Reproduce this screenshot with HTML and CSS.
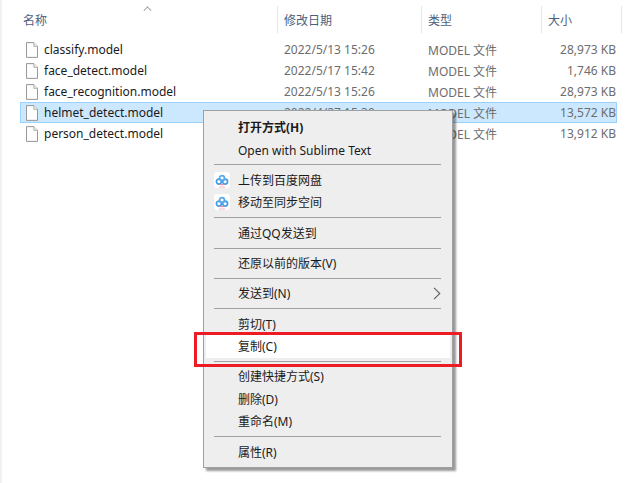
FILE: index.html
```html
<!DOCTYPE html>
<html lang="zh-CN">
<head>
    <meta charset="UTF-8">
    <title>文件列表</title>
    <link rel="stylesheet" href="styles.css">
</head>
<body>
    <div class="explorer">
        <div class="head-row">
            <div class="head-cell">名称<span class="sort-caret"></span></div>
            <div class="head-cell">修改日期</div>
            <div class="head-cell">类型</div>
            <div class="head-cell">大小</div>
        </div>
        <div class="file-list">
            <div class="file-row">
                <div class="name-cell"><svg class="file-icon" viewBox="0 0 13 17"><path d="M.5.5H8.5L12.5 4.5V16.5H.5Z" fill="#fdfdfd" stroke="#8c8c8c"/><path d="M8.5.5V4.5H12.5" fill="#eee" stroke="#a8a8a8"/></svg>classify.model</div>
                <div class="meta-cell">2022/5/13 15:26</div>
                <div class="meta-cell">MODEL 文件</div>
                <div class="size-cell">28,973 KB</div>
            </div>
            <div class="file-row">
                <div class="name-cell"><svg class="file-icon" viewBox="0 0 13 17"><path d="M.5.5H8.5L12.5 4.5V16.5H.5Z" fill="#fdfdfd" stroke="#8c8c8c"/><path d="M8.5.5V4.5H12.5" fill="#eee" stroke="#a8a8a8"/></svg>face_detect.model</div>
                <div class="meta-cell">2022/5/17 15:42</div>
                <div class="meta-cell">MODEL 文件</div>
                <div class="size-cell">1,746 KB</div>
            </div>
            <div class="file-row">
                <div class="name-cell"><svg class="file-icon" viewBox="0 0 13 17"><path d="M.5.5H8.5L12.5 4.5V16.5H.5Z" fill="#fdfdfd" stroke="#8c8c8c"/><path d="M8.5.5V4.5H12.5" fill="#eee" stroke="#a8a8a8"/></svg>face_recognition.model</div>
                <div class="meta-cell">2022/5/13 15:26</div>
                <div class="meta-cell">MODEL 文件</div>
                <div class="size-cell">28,973 KB</div>
            </div>
            <div class="file-row selected">
                <div class="name-cell"><svg class="file-icon" viewBox="0 0 13 17"><path d="M.5.5H8.5L12.5 4.5V16.5H.5Z" fill="#fdfdfd" stroke="#8c8c8c"/><path d="M8.5.5V4.5H12.5" fill="#eee" stroke="#a8a8a8"/></svg>helmet_detect.model</div>
                <div class="meta-cell">2022/4/27 15:30</div>
                <div class="meta-cell">MODEL 文件</div>
                <div class="size-cell">13,572 KB</div>
            </div>
            <div class="file-row">
                <div class="name-cell"><svg class="file-icon" viewBox="0 0 13 17"><path d="M.5.5H8.5L12.5 4.5V16.5H.5Z" fill="#fdfdfd" stroke="#8c8c8c"/><path d="M8.5.5V4.5H12.5" fill="#eee" stroke="#a8a8a8"/></svg>person_detect.model</div>
                <div class="meta-cell"></div>
                <div class="meta-cell">MODEL 文件</div>
                <div class="size-cell">13,912 KB</div>
            </div>
        </div>
    </div>

    <div class="context-menu">
        <div class="menu-item bold">打开方式(H)</div>
        <div class="menu-item">Open with Sublime Text</div>
        <div class="separator"></div>
        <div class="menu-item">
            <svg class="cloud-icon" viewBox="0 0 16 16"><rect width="16" height="16" rx="3" fill="#fff"/><path d="M5 15H11" stroke="#f7b3c4" stroke-width="1"/><circle cx="4.9" cy="9.6" r="2.5" fill="none" stroke="#3f9fe8" stroke-width="1.7"/><circle cx="11.1" cy="9.6" r="2.5" fill="none" stroke="#3f9fe8" stroke-width="1.7"/><circle cx="8" cy="6.2" r="2.5" fill="none" stroke="#5aa8ec" stroke-width="1.7"/><path d="M5.6 12Q8 13.4 10.4 12" fill="none" stroke="#ef7f9c" stroke-width="1.1"/></svg>
            上传到百度网盘
        </div>
        <div class="menu-item">
            <svg class="cloud-icon" viewBox="0 0 16 16"><rect width="16" height="16" rx="3" fill="#fff"/><path d="M5 15H11" stroke="#f7b3c4" stroke-width="1"/><circle cx="4.9" cy="9.6" r="2.5" fill="none" stroke="#3f9fe8" stroke-width="1.7"/><circle cx="11.1" cy="9.6" r="2.5" fill="none" stroke="#3f9fe8" stroke-width="1.7"/><circle cx="8" cy="6.2" r="2.5" fill="none" stroke="#5aa8ec" stroke-width="1.7"/><path d="M5.6 12Q8 13.4 10.4 12" fill="none" stroke="#ef7f9c" stroke-width="1.1"/></svg>
            移动至同步空间
        </div>
        <div class="separator"></div>
        <div class="menu-item">通过QQ发送到</div>
        <div class="separator"></div>
        <div class="menu-item">还原以前的版本(V)</div>
        <div class="separator"></div>
        <div class="menu-item">
            发送到(N)
            <svg class="submenu-arrow" viewBox="0 0 8 13"><path d="M1 .8L6.8 6.5L1 12.2" fill="none" stroke="#5f5f5f" stroke-width="1.1"/></svg>
        </div>
        <div class="separator"></div>
        <div class="menu-item">剪切(T)</div>
        <div class="menu-item highlighted">复制(C)</div>
        <div class="separator"></div>
        <div class="menu-item">创建快捷方式(S)</div>
        <div class="menu-item">删除(D)</div>
        <div class="menu-item">重命名(M)</div>
        <div class="separator"></div>
        <div class="menu-item">属性(R)</div>
    </div>

    <div class="red-mark"></div>
</body>
</html>
```

FILE: styles.css
```css
body {
    margin: 0;
    width: 638px;
    height: 483px;
    position: relative;
    overflow: hidden;
    background-color: #fff;
    font-family: "Noto Sans", "Noto Sans CJK SC", sans-serif;
    font-size: 12px;
}

.explorer {
    height: 100%;
    padding-top: 6px;
    padding-left: 20px;
    box-sizing: border-box;
    border-left: 2px solid #f1f1f1;
}

.head-row {
    display: grid;
    grid-template-columns: 258px 144px 120px 80px;
    height: 27px;
    margin-left: -2px;
}

.head-cell {
    position: relative;
    display: flex;
    align-items: center;
    padding-left: 6px;
    box-sizing: border-box;
    border-right: 1px solid #e5e5e5;
    color: #4c607a;
}

.head-cell:first-child {
    padding-left: 3px;
}

.sort-caret {
    position: absolute;
    left: 124px;
    top: 1px;
    width: 6px;
    height: 6px;
    border-top: 1px solid #8a8a8a;
    border-left: 1px solid #8a8a8a;
    transform: rotate(45deg) scale(.8);
}

.file-list {
    margin-top: 6px;
    margin-left: -2px;
}

.file-row {
    display: grid;
    grid-template-columns: 258px 144px 120px 73px;
    width: 597px;
    height: 21px;
    box-sizing: border-box;
    align-items: center;
    color: #6d6d6d;
    border: 1px solid transparent;
}

.file-row.selected {
    background-color: #cce8ff;
    border-color: #99d1ff;
}

.name-cell {
    display: flex;
    align-items: center;
    gap: 6px;
    padding-left: 5px;
    color: #1a1a1a;
}

.file-icon {
    width: 12px;
    height: 16px;
    flex: none;
}

.meta-cell {
    padding-left: 5px;
}

.size-cell {
    text-align: right;
}

.context-menu {
    position: absolute;
    left: 203px;
    top: 110px;
    width: 250px;
    height: 358px;
    box-sizing: border-box;
    padding-top: 5px;
    background-color: #eee;
    border: 1px solid #a0a0a0;
    box-shadow: 3px 3px 2px rgba(0, 0, 0, .4);
    color: #1a1a1a;
}

.menu-item {
    position: relative;
    height: 22.5px;
    line-height: 24px;
    padding-left: 34px;
}

.menu-item.bold {
    font-weight: 700;
}

.menu-item.highlighted {
    background-color: #fff;
    margin: 0 2px;
    padding-left: 32px;
}

.separator {
    height: 1px;
    margin: 3.4px 11px 3.45px 10px;
    background-color: #a0a0a0;
}

.cloud-icon {
    position: absolute;
    left: 10px;
    top: 3px;
    width: 16px;
    height: 16px;
}

.submenu-arrow {
    position: absolute;
    right: 11px;
    top: 5px;
    width: 8px;
    height: 13px;
}

.red-mark {
    position: absolute;
    left: 194px;
    top: 332px;
    width: 268px;
    height: 35px;
    box-sizing: border-box;
    border: 3px solid #ed1c24;
}
```
